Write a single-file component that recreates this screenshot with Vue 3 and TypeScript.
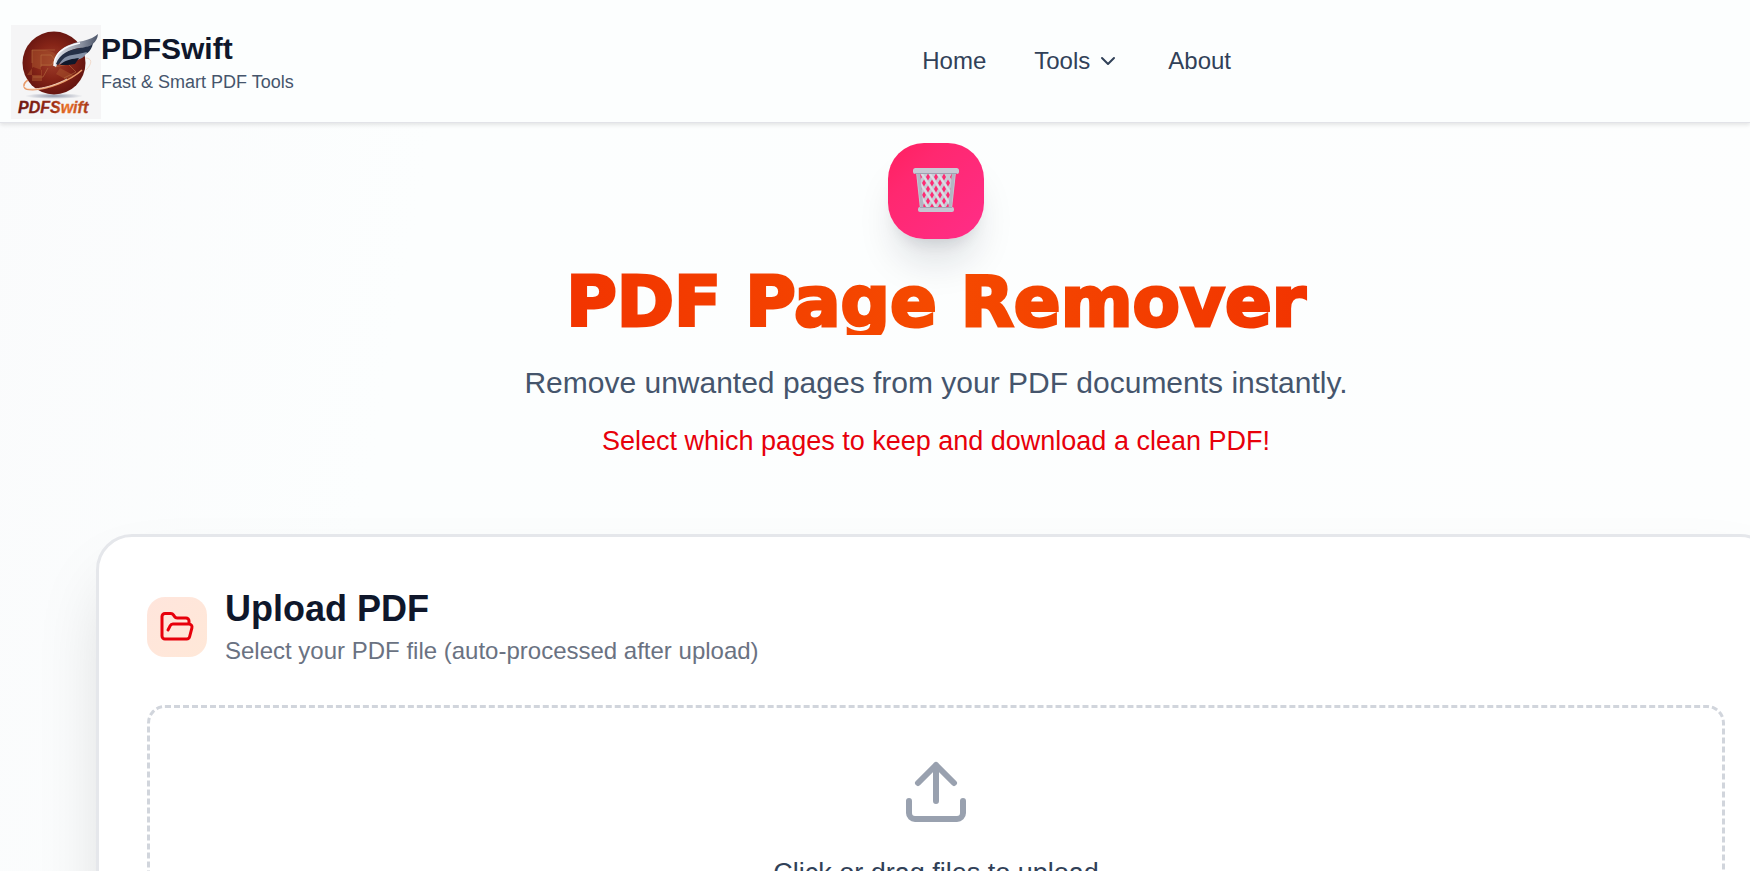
<script setup lang="ts">
import { ref } from 'vue'

const links: { label: string; menu: boolean }[] = [
  { label: 'Home', menu: false },
  { label: 'Tools', menu: true },
  { label: 'About', menu: false },
]
const fileName = ref('')

// Openings of the basket's weave: rows alternate by half a step.
const holes: string[] = []
for (let row = 0; row < 6; row++) {
  for (let col = 0; col < 5; col++) {
    const x = 8 + col * 8 + (row % 2) * 4
    const y = 10 + row * 6
    holes.push(`M${x} ${y - 3.5}l2 3.500-2 3.500-2-3.500z`)
  }
}

function pick(event: Event): void {
  const input = event.target as HTMLInputElement
  fileName.value = input.files?.[0]?.name ?? ''
}
</script>

<template>
  <div class="page">
    <header class="header">
      <a class="brand" href="#">
        <svg class="logo" viewBox="0 0 90 94" role="img" aria-label="PDFSwift logo">
          <defs>
            <linearGradient id="word" x1="0" x2="1">
              <stop offset="0" stop-color="#6b1712" />
              <stop offset="0.5" stop-color="#9a2c16" />
              <stop offset="0.68" stop-color="#ee7428" />
              <stop offset="1" stop-color="#a33416" />
            </linearGradient>
            <radialGradient id="ball" cx="0.48" cy="0.48" r="0.5">
              <stop offset="0" stop-color="#a0402c" />
              <stop offset="0.55" stop-color="#852417" />
              <stop offset="1" stop-color="#681611" />
            </radialGradient>
            <linearGradient id="wing" x1="0" x2="1">
              <stop offset="0" stop-color="#e8ebf0" />
              <stop offset="0.45" stop-color="#a8adb9" />
              <stop offset="1" stop-color="#4b5468" />
            </linearGradient>
            <radialGradient id="ground">
              <stop offset="0" stop-color="#8f96aa" />
              <stop offset="1" stop-color="#f5f5f6" />
            </radialGradient>
          </defs>
          <rect width="90" height="94" fill="#f5f5f6" />
          <ellipse cx="43" cy="71" rx="29" ry="3" fill="url(#ground)" />
          <circle cx="43" cy="38" r="31.500" fill="url(#ball)" />
          <path d="M21 25h13l8 2 6 6-5 8H30v9h-9zM22 42l-6 8h5v6h10V45zM49 43l15 8-10 3-9-5z" fill="#a7532d" opacity="0.55" />
          <path d="M21 38V25h23M30 42V30h10l4 5-4 5H30M44 42l13-3 8 8-12 6M22 52h10l5-9" fill="none" stroke="#bd7945" stroke-width="1" opacity="0.5" />
          <path d="M17 55C11 59 12 64 18 64.500C36 66 60 55 71 45" fill="none" stroke="#e89b6a" stroke-width="1.600" />
          <path d="M13 61C15 66 35 65 56 54" fill="none" stroke="#ffe9d6" stroke-width="0.800" />
          <path d="M74 33C81 33 82 38 75 45" fill="none" stroke="#f0d3c0" stroke-width="0.800" />
          <path d="M43 41C43 25 56 19 72 16C79 14 84 12 87 9C86 18 80 22 69 23C57 25 50 29 45 42Z" fill="url(#wing)" />
          <path d="M45 39C49 28 58 25 69 23C77 22 81 20 82 18C80 28 75 30 64 31C55 32 51 35 47 40Z" fill="#253047" />
          <path d="M48 40C52 31 59 30 67 29L76 27C73 34 67 35 60 36C55 36 51 38 48 40Z" fill="#8490a6" />
          <path d="M49 40C55 34 62 34 68 33L64 39 57 40Z" fill="#10182b" />
          <path d="M43 41C43 27 54 21 69 18" fill="none" stroke="#fafbff" stroke-width="1.500" />
          <text x="7" y="88" font-family="Liberation Sans, sans-serif" font-weight="700" font-style="italic" font-size="16" fill="url(#word)" stroke="url(#word)" stroke-width="0.300">PDFSwift</text>
        </svg>
        <span class="brand-copy">
          <strong class="brand-name">PDFSwift</strong>
          <span class="tagline">Fast &amp; Smart PDF Tools</span>
        </span>
      </a>
      <nav class="nav" aria-label="Main">
        <template v-for="link in links" :key="link.label">
          <button v-if="link.menu" class="nav-item" type="button" aria-haspopup="true">
            {{ link.label }}
            <svg class="chevron" viewBox="0 0 24 24" aria-hidden="true"><path d="m6 9 6 6 6-6" /></svg>
          </button>
          <a v-else class="nav-item" href="#">{{ link.label }}</a>
        </template>
      </nav>
    </header>

    <main class="main">
      <section class="hero">
        <div class="badge">
          <svg class="basket" viewBox="0 0 48 48" aria-hidden="true">
            <defs>
              <clipPath id="weave"><path d="M8 7h32l-3 33H11z" /></clipPath>
            </defs>
            <path d="M4 5h40l-4 37H8z" fill="#c8cad4" />
            <g clip-path="url(#weave)">
              <path d="M8 4l24 36M16 4l24 36M24 4l24 36M0 4l24 36M-8 4l24 36" fill="none" stroke="#dcdde4" stroke-width="2" />
              <path :d="holes.join('')" fill="#ff2a73" />
            </g>
            <path d="M6.500 7l3.500 33M41.500 7L38 40" stroke="#b3b5c3" stroke-width="3" />
            <rect x="1" y="1" width="46" height="6" rx="2.500" fill="#c8cad4" />
            <path d="M3 6.500h42" stroke="#9fa1b2" stroke-width="1.200" />
            <rect x="6" y="40" width="36" height="5" rx="2" fill="#c5c7d2" />
            <path d="M8 40.500h32" stroke="#a3a5b5" stroke-width="1" />
          </svg>
        </div>
        <h1 class="title">PDF Page Remover</h1>
        <p class="lead">Remove unwanted pages from your PDF documents instantly.</p>
        <p class="note">Select which pages to keep and download a clean PDF!</p>
      </section>

      <section class="card">
        <div class="card-head">
          <span class="folder">
            <svg viewBox="0 0 24 24" aria-hidden="true">
              <path d="m6 14 1.500-2.900A2 2 0 0 1 9.240 10H20a2 2 0 0 1 1.940 2.500l-1.540 6a2 2 0 0 1-1.950 1.500H4a2 2 0 0 1-2-2V5a2 2 0 0 1 2-2h3.900a2 2 0 0 1 1.690.9l.81 1.200a2 2 0 0 0 1.670.9H18a2 2 0 0 1 2 2v2" />
            </svg>
          </span>
          <div>
            <h2 class="card-title">Upload PDF</h2>
            <p class="card-sub">Select your PDF file (auto-processed after upload)</p>
          </div>
        </div>
        <label class="drop">
          <input class="file" type="file" accept="application/pdf" @change="pick" />
          <svg class="upload" viewBox="0 0 24 24" aria-hidden="true">
            <path d="M12 3v12M18 9l-6-6-6 6M21 15v4a2 2 0 0 1-2 2H5a2 2 0 0 1-2-2v-4" />
          </svg>
          <span class="drop-text">{{ fileName || 'Click or drag files to upload' }}</span>
        </label>
      </section>
    </main>
  </div>
</template>

<style>
body {
  margin: 0;
}
</style>

<style scoped>
.page {
  height: 100vh;
  overflow: hidden;
  background: linear-gradient(100deg, #fafbfc 0%, #fcfefe 24%, #fdfefe 100%);
  color: #0f172b;
  font-family: "Liberation Sans", Arial, sans-serif;
}

.page * {
  box-sizing: border-box;
}

h1,
h2,
p {
  margin: 0;
}

.header {
  position: relative;
  display: flex;
  align-items: flex-end;
  justify-content: space-between;
  height: 123px;
  padding: 0 519px 3px 11px;
  border-bottom: 1px solid #e2e3e8;
  background: #fcfefe;
  box-shadow: 0 2px 4px rgba(0, 0, 0, 0.1);
}

.brand {
  display: flex;
  color: inherit;
  text-decoration: none;
}

.logo {
  width: 90px;
  height: 94px;
}

.brand-copy {
  display: flex;
  flex-direction: column;
  padding-top: 6px;
}

.brand-name {
  font-size: 30px;
  line-height: 36px;
}

.tagline {
  color: #45556c;
  font-size: 18px;
  line-height: 30px;
}

.nav {
  display: flex;
  gap: 48px;
  margin-bottom: 40px;
}

.nav-item {
  display: flex;
  align-items: center;
  gap: 6px;
  padding: 0;
  border: 0;
  background: none;
  color: #314158;
  font: 24px/36px "Liberation Sans", Arial, sans-serif;
  text-decoration: none;
}

.chevron {
  width: 24px;
  height: 24px;
  fill: none;
  stroke: currentColor;
  stroke-width: 2;
  stroke-linecap: round;
  stroke-linejoin: round;
}

.main {
  margin-right: -122px;
  padding: 20px 96px 0;
}

.hero {
  display: flex;
  flex-direction: column;
  align-items: center;
  text-align: center;
}

.badge {
  display: grid;
  place-items: center;
  width: 96px;
  height: 96px;
  border-radius: 36px;
  background: linear-gradient(135deg, #ff2060, #ff2870 30%, #ff2d88);
  box-shadow: 0 30px 38px -8px rgba(15, 23, 43, 0.13), 0 12px 15px -9px rgba(15, 23, 43, 0.12);
}

.basket {
  width: 48px;
  height: 48px;
}

.title {
  height: 72px;
  margin-top: 24px;
  padding: 3px 2px 0;
  background: linear-gradient(90deg, #f23400, #f54a00 50%, #f23400);
  background-clip: text;
  -webkit-background-clip: text;
  color: transparent;
  font-family: "Arial Black", "DejaVu Sans", sans-serif;
  font-size: 69px;
  font-weight: 900;
  line-height: 72px;
  -webkit-text-stroke: 3px transparent;
}

.lead {
  margin-top: 24px;
  color: #45556c;
  font-size: 30px;
  line-height: 48px;
}

.note {
  margin-top: 12px;
  color: #e7000b;
  font-size: 27px;
  line-height: 44px;
}

.card {
  margin-top: 71px;
  padding: 48px;
  border: 3px solid #e5e7eb;
  border-radius: 36px;
  background: #fff;
  box-shadow: 0 38px 75px -18px rgba(0, 0, 0, 0.18);
}

.card-head {
  display: flex;
  align-items: center;
  gap: 18px;
}

.folder {
  display: grid;
  place-items: center;
  width: 60px;
  height: 60px;
  border-radius: 18px;
  background: linear-gradient(135deg, #ffe5dc, #ffe8d8);
}

.folder svg {
  width: 36px;
  height: 36px;
  fill: none;
  stroke: #e7000b;
  stroke-width: 2;
  stroke-linecap: round;
  stroke-linejoin: round;
}

.card-title {
  font-size: 36px;
  line-height: 48px;
}

.card-sub {
  color: #6a7282;
  font-size: 24px;
  line-height: 36px;
}

.drop {
  position: relative;
  display: flex;
  flex-direction: column;
  align-items: center;
  margin-top: 36px;
  padding: 48px;
  border: 3px dashed #d1d5dc;
  border-radius: 18px;
}

.file {
  position: absolute;
  inset: 0;
  width: 100%;
  height: 100%;
  opacity: 0;
}

.upload {
  width: 72px;
  height: 72px;
  fill: none;
  stroke: #99a1af;
  stroke-width: 2;
  stroke-linecap: round;
  stroke-linejoin: round;
}

.drop-text {
  margin-top: 24px;
  color: #314158;
  font-size: 27px;
  line-height: 42px;
}
</style>
